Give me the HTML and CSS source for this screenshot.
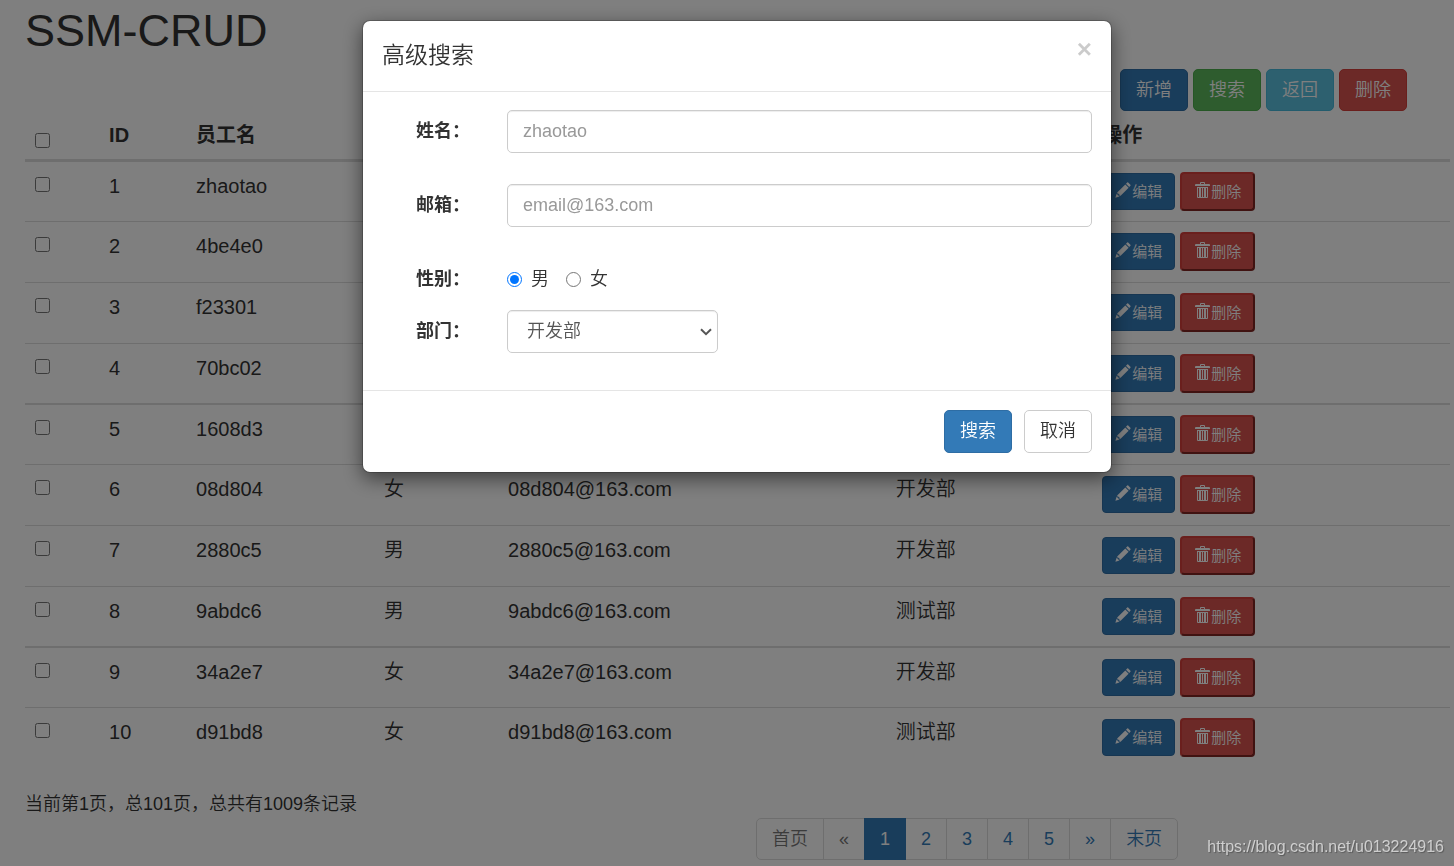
FILE: index.html
```html
<!DOCTYPE html>
<html lang="zh-CN">
<head>
<meta charset="utf-8">
<title>SSM-CRUD</title>
<link rel="stylesheet" href="styles.css">
</head>
<body>
<svg class="sprite" aria-hidden="true">
  <symbol id="pencil" viewBox="0 0 16 16">
    <path d="M12.2 0.6 Q12.7 0.1 13.2 0.6 L15.4 2.8 Q15.9 3.3 15.4 3.8 L14.2 5 L11 1.8 Z M10.3 2.4 L13.6 5.7 L5.6 13.8 L4.5 13.7 L4.2 11.9 L2.4 11.6 L2.2 10.5 Z M1.6 11.4 L2 12.6 L3.3 12.8 L3.5 14 L4.7 14.4 L0.4 15.7 Z"/>
  </symbol>
  <symbol id="trash" viewBox="0 0 16 16">
    <path fill-rule="evenodd" d="M6 2 V1 Q6 0 7 0 H10 Q11 0 11 1 V2 H15 Q16 2 16 3 V4 H1 V3 Q1 2 2 2 Z M7 2 H10 V1 H7 Z M3 5 H14 V15 Q14 16 13 16 H4 Q3 16 3 15 Z M4 6 V15 H5 V6 Z M7 6 V15 H8 V6 Z M9 6 V15 H10 V6 Z M12 6 V15 H13 V6 Z"/>
  </symbol>
</svg>

<main class="page">
  <h1 class="page-title">SSM-CRUD</h1>
  <div class="toolbar">
    <button type="button" class="btn btn-primary">新增</button>
    <button type="button" class="btn btn-success">搜索</button>
    <button type="button" class="btn btn-info">返回</button>
    <button type="button" class="btn btn-danger">删除</button>
  </div>

  <table class="emps">
    <colgroup>
      <col class="col-check"><col class="col-id"><col class="col-name"><col class="col-gender"><col class="col-email"><col class="col-dept"><col>
    </colgroup>
    <thead>
      <tr><th><input type="checkbox" class="check" aria-label="全选"></th><th>ID</th><th>员工名</th><th>性别</th><th>邮箱</th><th>部门</th><th>操作</th></tr>
    </thead>
    <tbody>
      <tr><td><input type="checkbox" class="check" aria-label="选择 1"></td><td>1</td><td>zhaotao</td><td>男</td><td>zhaotao@163.com</td><td>开发部</td><td><div class="actions"><button type="button" class="btn-sm btn-primary"><svg class="icon"><use href="#pencil"/></svg>编辑</button><button type="button" class="btn-sm btn-danger btn-del"><svg class="icon"><use href="#trash"/></svg>删除</button></div></td></tr>
      <tr><td><input type="checkbox" class="check" aria-label="选择 2"></td><td>2</td><td>4be4e0</td><td>男</td><td>4be4e0@163.com</td><td>开发部</td><td><div class="actions"><button type="button" class="btn-sm btn-primary"><svg class="icon"><use href="#pencil"/></svg>编辑</button><button type="button" class="btn-sm btn-danger btn-del"><svg class="icon"><use href="#trash"/></svg>删除</button></div></td></tr>
      <tr><td><input type="checkbox" class="check" aria-label="选择 3"></td><td>3</td><td>f23301</td><td>男</td><td>f23301@163.com</td><td>开发部</td><td><div class="actions"><button type="button" class="btn-sm btn-primary"><svg class="icon"><use href="#pencil"/></svg>编辑</button><button type="button" class="btn-sm btn-danger btn-del"><svg class="icon"><use href="#trash"/></svg>删除</button></div></td></tr>
      <tr><td><input type="checkbox" class="check" aria-label="选择 4"></td><td>4</td><td>70bc02</td><td>男</td><td>70bc02@163.com</td><td>开发部</td><td><div class="actions"><button type="button" class="btn-sm btn-primary"><svg class="icon"><use href="#pencil"/></svg>编辑</button><button type="button" class="btn-sm btn-danger btn-del"><svg class="icon"><use href="#trash"/></svg>删除</button></div></td></tr>
      <tr><td><input type="checkbox" class="check" aria-label="选择 5"></td><td>5</td><td>1608d3</td><td>男</td><td>1608d3@163.com</td><td>开发部</td><td><div class="actions"><button type="button" class="btn-sm btn-primary"><svg class="icon"><use href="#pencil"/></svg>编辑</button><button type="button" class="btn-sm btn-danger btn-del"><svg class="icon"><use href="#trash"/></svg>删除</button></div></td></tr>
      <tr><td><input type="checkbox" class="check" aria-label="选择 6"></td><td>6</td><td>08d804</td><td>女</td><td>08d804@163.com</td><td>开发部</td><td><div class="actions"><button type="button" class="btn-sm btn-primary"><svg class="icon"><use href="#pencil"/></svg>编辑</button><button type="button" class="btn-sm btn-danger btn-del"><svg class="icon"><use href="#trash"/></svg>删除</button></div></td></tr>
      <tr><td><input type="checkbox" class="check" aria-label="选择 7"></td><td>7</td><td>2880c5</td><td>男</td><td>2880c5@163.com</td><td>开发部</td><td><div class="actions"><button type="button" class="btn-sm btn-primary"><svg class="icon"><use href="#pencil"/></svg>编辑</button><button type="button" class="btn-sm btn-danger btn-del"><svg class="icon"><use href="#trash"/></svg>删除</button></div></td></tr>
      <tr><td><input type="checkbox" class="check" aria-label="选择 8"></td><td>8</td><td>9abdc6</td><td>男</td><td>9abdc6@163.com</td><td>测试部</td><td><div class="actions"><button type="button" class="btn-sm btn-primary"><svg class="icon"><use href="#pencil"/></svg>编辑</button><button type="button" class="btn-sm btn-danger btn-del"><svg class="icon"><use href="#trash"/></svg>删除</button></div></td></tr>
      <tr><td><input type="checkbox" class="check" aria-label="选择 9"></td><td>9</td><td>34a2e7</td><td>女</td><td>34a2e7@163.com</td><td>开发部</td><td><div class="actions"><button type="button" class="btn-sm btn-primary"><svg class="icon"><use href="#pencil"/></svg>编辑</button><button type="button" class="btn-sm btn-danger btn-del"><svg class="icon"><use href="#trash"/></svg>删除</button></div></td></tr>
      <tr><td><input type="checkbox" class="check" aria-label="选择 10"></td><td>10</td><td>d91bd8</td><td>女</td><td>d91bd8@163.com</td><td>测试部</td><td><div class="actions"><button type="button" class="btn-sm btn-primary"><svg class="icon"><use href="#pencil"/></svg>编辑</button><button type="button" class="btn-sm btn-danger btn-del"><svg class="icon"><use href="#trash"/></svg>删除</button></div></td></tr>
    </tbody>
  </table>

  <p class="summary">当前第1页，总101页，总共有1009条记录</p>
  <nav class="pager" aria-label="分页">
    <a class="page-link disabled" href="#">首页</a>
    <a class="page-link disabled" href="#">«</a>
    <a class="page-link active" href="#">1</a>
    <a class="page-link" href="#">2</a>
    <a class="page-link" href="#">3</a>
    <a class="page-link" href="#">4</a>
    <a class="page-link" href="#">5</a>
    <a class="page-link" href="#">»</a>
    <a class="page-link" href="#">末页</a>
  </nav>
</main>

<div class="backdrop">
  <section class="modal" role="dialog" aria-labelledby="modal-title">
    <header class="modal-header">
      <h2 class="modal-title" id="modal-title">高级搜索</h2>
      <button type="button" class="close" aria-label="关闭">×</button>
    </header>
    <form class="modal-body">
      <div class="field">
        <label class="field-label" for="name">姓名：</label>
        <input class="control" id="name" type="text" placeholder="zhaotao">
      </div>
      <div class="field">
        <label class="field-label" for="email">邮箱：</label>
        <input class="control" id="email" type="text" placeholder="email@163.com">
      </div>
      <div class="field field-tight" role="radiogroup" aria-labelledby="gender-label">
        <span class="field-label" id="gender-label">性别：</span>
        <div class="radios">
          <label class="radio-label"><input class="radio" type="radio" name="gender" checked>男</label>
          <label class="radio-label"><input class="radio" type="radio" name="gender">女</label>
        </div>
      </div>
      <div class="field">
        <label class="field-label" for="dept">部门：</label>
        <div class="select-wrap">
          <select class="control select" id="dept"><option>开发部</option><option>测试部</option></select>
          <svg class="chevron" viewBox="0 0 12 8" aria-hidden="true"><path d="M1 1.2 L6 6.2 L11 1.2" fill="none" stroke="#555" stroke-width="2"/></svg>
        </div>
      </div>
    </form>
    <footer class="modal-footer">
      <button type="button" class="btn btn-primary">搜索</button>
      <button type="button" class="btn btn-default">取消</button>
    </footer>
  </section>
</div>
<div class="watermark">https://blog.csdn.net/u013224916</div>
</body>
</html>
```

FILE: styles.css
```css
* { box-sizing: border-box; }

body {
  margin: 0;
  background: #fff;
  color: #333;
  font: 350 18px/25px "Liberation Sans", "Noto Sans CJK SC", sans-serif;
}

button, input, select { font: inherit; }

.sprite { display: none; }

.page { padding: 6px 4px 6px 25px; }

.page-title {
  margin: 0 0 13px;
  font-size: 45px;
  line-height: 50px;
  font-weight: 400;
}

.toolbar {
  display: flex;
  justify-content: flex-end;
  gap: 5px;
  padding-right: 43px;
}

.btn {
  padding: 8px 15px;
  border: 1px solid transparent;
  border-radius: 5px;
  color: #fff;
}

.btn-primary { background: #337ab7; border-color: #2e6da4; }
.btn-success { background: #5cb85c; border-color: #4cae4c; }
.btn-info { background: #5bc0de; border-color: #46b8da; }
.btn-danger { background: #d9534f; border-color: #d43f3a; }
.btn-default { background: #fff; border-color: #ccc; color: #333; }

.toolbar .btn { padding: 8px 15px 7px; }

.emps {
  width: 100%;
  table-layout: fixed;
  border-collapse: separate;
  border-spacing: 0;
  font-size: 20px;
  line-height: 28px;
}

.col-check { width: 5.2%; }
.col-id { width: 6.1%; }
.col-name { width: 13.2%; }
.col-gender { width: 8.7%; }
.col-email { width: 27.2%; }
.col-dept { width: 14.5%; }

.emps th {
  padding: 10px;
  border-bottom: 1px solid #ddd;
  text-align: left;
  vertical-align: bottom;
  font-weight: 700;
}

.emps td {
  height: 61px;
  padding: 10px 10px 0;
  border-top: 1px solid #ddd;
  vertical-align: top;
}

.emps tr:nth-child(4n) td { height: 60px; }
.emps tbody tr:nth-child(4n + 1) td { border-top-width: 2px; }

.check {
  display: block;
  width: 15px;
  height: 15px;
  margin: 5px 0 1px;
}

.actions {
  display: flex;
  align-items: center;
  gap: 5px;
}

.btn-sm {
  display: flex;
  align-items: center;
  gap: 1px;
  padding: 7px 12px 6px;
  border-width: 1px;
  border-style: solid;
  border-radius: 4px;
  color: #fff;
  font-size: 15px;
  line-height: 22px;
}

.btn-del { border: 2px outset #d43f3a; }

.icon {
  width: 16px;
  height: 16px;
  margin-bottom: 4px;
  fill: #fff;
}

.summary { margin: 24px 0 1px; }

.pager {
  display: flex;
  margin-left: 51.3%;
}

.page-link {
  margin-left: -1px;
  padding: 8px 15px 7px;
  border: 1px solid #ddd;
  color: #337ab7;
  text-decoration: none;
}

.page-link:first-child { margin-left: 0; border-radius: 5px 0 0 5px; }
.page-link:last-child { border-radius: 0 5px 5px 0; }
.page-link.disabled { color: #777; }
.page-link.active {
  position: relative;
  background: #337ab7;
  border-color: #337ab7;
  color: #fff;
}

.backdrop {
  position: fixed;
  inset: 0;
  padding: 20px 0 0 20px;
  background: rgba(0, 0, 0, .5);
}

.modal {
  width: 100%;
  max-width: 750px;
  margin: 0 auto;
  border: 1px solid rgba(0, 0, 0, .2);
  border-radius: 8px;
  background: #fff;
  background-clip: padding-box;
  box-shadow: 0 6px 19px rgba(0, 0, 0, .5);
}

.modal-header {
  display: flex;
  justify-content: space-between;
  align-items: flex-start;
  padding: 18px 19px 20px;
  border-bottom: 1px solid #e5e5e5;
}

.modal-title {
  margin: 0;
  font-size: 23px;
  line-height: 32px;
  font-weight: 350;
}

.close {
  margin-top: -3px;
  padding: 0;
  border: 0;
  background: none;
  color: #000;
  font-size: 26px;
  line-height: 26px;
  font-weight: 700;
  opacity: .2;
}

.modal-body { padding: 18px 19px 6px; }

.field {
  display: grid;
  grid-template-columns: 88px 1fr;
  column-gap: 37px;
  align-items: center;
  min-height: 43px;
  margin-bottom: 31px;
}

.field-tight { margin-bottom: 9px; }

.field-label { font-weight: 700; text-align: right; }

.control {
  width: 100%;
  height: 43px;
  padding: 8px 15px;
  border: 1px solid #ccc;
  border-radius: 5px;
  background: #fff;
  color: #555;
  box-shadow: inset 0 1px 1px rgba(0, 0, 0, .075);
}

.control::placeholder { color: #999; }

.radios { display: flex; gap: 17px; }

.radio-label {
  display: flex;
  align-items: center;
  gap: 9px;
}

.radio { width: 15px; height: 15px; margin: 0; }

.select-wrap {
  display: grid;
  align-items: center;
  width: 36%;
}

.select { grid-area: 1 / 1; appearance: none; padding-left: 19px; }

.chevron {
  grid-area: 1 / 1;
  justify-self: end;
  width: 12px;
  height: 8px;
  margin-right: 6px;
  pointer-events: none;
}

.modal-footer {
  display: flex;
  justify-content: flex-end;
  gap: 12px;
  padding: 19px;
  border-top: 1px solid #e5e5e5;
}

.watermark {
  position: fixed;
  right: 10px;
  bottom: 7px;
  color: rgba(255, 255, 255, .65);
  font-size: 16px;
  text-shadow: 1px 1px 1px rgba(0, 0, 0, .3);
}
```
